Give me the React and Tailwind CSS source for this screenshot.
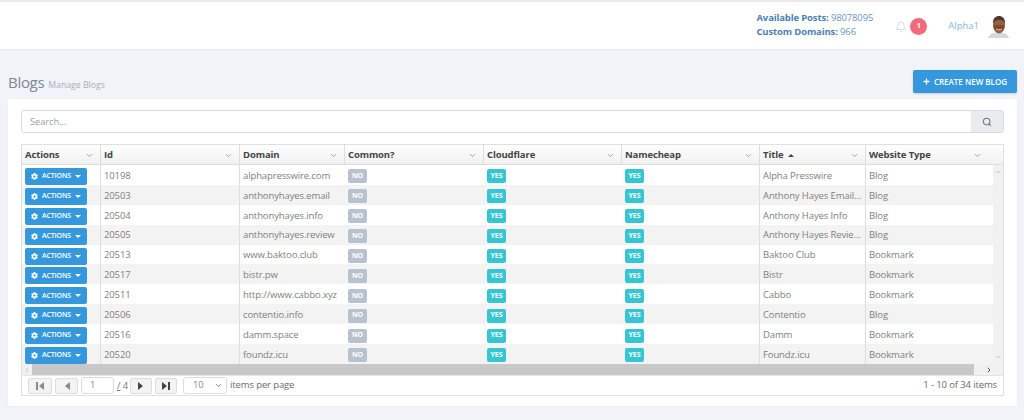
import { Bell, ChevronDown, ChevronLeft, ChevronRight, ChevronUp, Search } from "lucide-react";
import { FaCog, FaPlus } from "react-icons/fa";

const columns = [
  { label: "Actions", width: "w-[78px] pl-[3px] pr-[6px]" },
  { label: "Id", width: "w-[139px] border-l border-[#dddddd] pl-[3px] pr-[6px]" },
  { label: "Domain", width: "w-[105px] border-l border-[#dddddd] pl-[3px] pr-[6px]" },
  { label: "Common?", width: "w-[139px] border-l border-[#dddddd] pl-[3px] pr-[6px]" },
  { label: "Cloudflare", width: "w-[138px] border-l border-[#dddddd] pl-[3px] pr-[6px]" },
  { label: "Namecheap", width: "w-[138px] border-l border-[#dddddd] pl-[3px] pr-[6px]" },
  { label: "Title", width: "w-[106px] border-l border-[#dddddd] pl-[3px] pr-[6px]", sorted: true },
  { label: "Website Type", width: "flex-1 border-l border-[#dddddd] pl-[3px] pr-[21px]" },
];

const rows = [
  ["10198", "alphapresswire.com", "Alpha Presswire", "Blog"],
  ["20503", "anthonyhayes.email", "Anthony Hayes Email...", "Blog"],
  ["20504", "anthonyhayes.info", "Anthony Hayes Info", "Blog"],
  ["20505", "anthonyhayes.review", "Anthony Hayes Revie...", "Blog"],
  ["20513", "www.baktoo.club", "Baktoo Club", "Bookmark"],
  ["20517", "bistr.pw", "Bistr", "Bookmark"],
  ["20511", "http://www.cabbo.xyz", "Cabbo", "Bookmark"],
  ["20506", "contentio.info", "Contentio", "Blog"],
  ["20516", "damm.space", "Damm", "Bookmark"],
  ["20520", "foundz.icu", "Foundz.icu", "Bookmark"],
];

function Avatar() {
  return (
    <svg width="21" height="22" viewBox="0 0 21 22" className="shrink-0">
      <path d="M0 22c1-4 5-5.500 10.500-5.500S20 18 21 22z" fill="#d6d9d9" />
      <ellipse cx="11" cy="9" rx="6" ry="8.500" fill="#98603f" />
      <path d="M5 8c-.5-6 3-8 6-8s6.500 2 6 8c-1-3-2-4-6-4S6 5 5 8z" fill="#4a3a33" />
      <path d="M5.500 10c2-1.500 3.500-1 5.500-1s3.500-.5 5.500 1c0 2-1 3-1.500 4-2 1-6 1-8 0-.5-1-1.500-2-1.500-4z" fill="#7d4a30" />
      <path d="M8 13c2 1.200 4 1.200 6 0" stroke="#e6d6ca" strokeWidth="1" fill="none" />
    </svg>
  );
}

function Badge({ yes }) {
  return (
    <span className={`flex h-[14px] w-[19px] items-center justify-center rounded-[2px] text-[7px] font-bold text-white ${yes ? "bg-[#36c6d3]" : "bg-[#b8c1cf]"}`}>
      {yes ? "YES" : "NO"}
    </span>
  );
}

function ActionsButton() {
  return (
    <button className="flex h-[17px] w-[62px] items-center justify-center gap-[4px] rounded-[2px] bg-[#3598dc] text-[7px] font-semibold text-white">
      <FaCog className="text-[7px]" />
      <span>ACTIONS</span>
      <span className="h-0 w-0 border-x-[3px] border-t-[3px] border-x-transparent border-t-white" />
    </button>
  );
}

function PagerButton({ children, muted, width }) {
  return (
    <button className={`flex h-[16px] items-center justify-center rounded-[2px] border border-[#dddddd] bg-[#f3f3f3] ${width} ${muted ? "text-[#8a8a8a]" : "text-[#444444]"}`}>
      {children}
    </button>
  );
}

function Glyph({ d }) {
  return (
    <svg width="10" height="8" viewBox="0 0 10 8" fill="currentColor">
      <path d={d} />
    </svg>
  );
}

export default function App() {
  return (
    <div className="flex h-[420px] w-[1024px] flex-col overflow-hidden bg-[#f2f3f8] font-['Open_Sans',sans-serif]">
      <header className="flex h-[50px] items-center justify-end border-t-2 border-b border-t-[#e8eaec] border-b-[#e8e9ef] bg-white pr-[15px] pt-[2px]">
        <div className="mb-[4px] mr-[22px] text-[9.5px] leading-[14px] tracking-[-0.14px] text-[#6f93b8]">
          <div><span className="font-bold text-[#4a7fb5]">Available Posts:</span> 98078095</div>
          <div><span className="font-bold text-[#4a7fb5]">Custom Domains:</span> 966</div>
        </div>
        <Bell className="h-[12px] w-[12px] text-[#c5d3e0]" strokeWidth={1.5} />
        <span className="ml-[3px] flex h-[17px] w-[17px] items-center justify-center rounded-full bg-[#f36a7b] text-[7px] font-bold text-white">1</span>
        <span className="ml-[21px] mr-[9px] text-[9.5px] text-[#8db4dc]">Alpha1</span>
        <Avatar />
      </header>

      <div className="flex h-[49px] items-end justify-between pb-[6px] pl-[8px] pr-[7px]">
        <div className="flex items-baseline gap-[4px]">
          <h1 className="text-[15px] leading-[22px] tracking-[-0.3px] text-[#7d8694]">Blogs</h1>
          <span className="text-[8.7px] text-[#a7afbc]">Manage Blogs</span>
        </div>
        <button className="flex h-[23px] w-[104px] items-center justify-end gap-[4px] rounded-[2px] bg-[#3598dc] pr-[10px] text-[8px] font-semibold text-white shadow-[0_1px_2px_rgba(0,0,0,0.15)]">
          <FaPlus className="text-[7px]" />
          CREATE NEW BLOG
        </button>
      </div>

      <main className="ml-[8px] flex h-[307px] w-[1009px] flex-col bg-white px-[13px] pt-[11px] shadow-[0_1px_3px_rgba(0,0,0,0.04)]">
        <div className="flex h-[23px] overflow-hidden rounded-[3px] border border-[#d5dce6]">
          <input placeholder="Search..." className="flex-1 px-[8px] text-[9.2px] text-[#555555] outline-none placeholder:text-[#9aa0a8]" />
          <button className="flex w-[32px] items-center justify-center bg-[#e9ebef] text-[#6d7680]">
            <Search className="h-[10px] w-[10px]" strokeWidth={2.5} />
          </button>
        </div>

        <div className="mt-[11px] flex h-[252px] flex-col border border-[#e0e0e0] text-[9.5px] tracking-[-0.12px]">
          <div className="flex h-[20px] border-b border-[#dddddd] bg-gradient-to-b from-white to-[#f1f1f1]">
            {columns.map((col) => (
              <div key={col.label} className={`flex items-center justify-between pt-[1px] ${col.width}`}>
                <span className="flex items-center gap-[5px] whitespace-nowrap font-bold text-[#444444]">
                  {col.label}
                  {col.sorted && <span className="h-0 w-0 border-x-[3px] border-b-[3px] border-x-transparent border-b-[#444444]" />}
                </span>
                <ChevronDown className="h-[9px] w-[9px] text-[#888888]" />
              </div>
            ))}
          </div>

          <div className="flex min-h-0 flex-1">
            <div className="flex-1">
              {rows.map((row, i) => (
                <div key={row[0]} className={`flex h-[19.9px] items-center text-[#808080] ${i % 2 ? "bg-[#f3f3f3]" : "bg-white"}`}>
                  <div className="flex h-full w-[78px] items-center pl-[3px] pt-[3px]"><ActionsButton /></div>
                  <div className="flex h-full w-[139px] items-center border-l border-[#dddddd] pl-[3px] pt-[2px]">{row[0]}</div>
                  <div className="flex h-full w-[105px] items-center whitespace-nowrap border-l border-[#dddddd] pl-[3px] pt-[2px]">{row[1]}</div>
                  <div className="flex h-full w-[139px] items-center pl-[4px] pt-[3px]"><Badge /></div>
                  <div className="flex h-full w-[138px] items-center pl-[4px] pt-[3px]"><Badge yes /></div>
                  <div className="flex h-full w-[138px] items-center pl-[4px] pt-[3px]"><Badge yes /></div>
                  <div className="flex h-full w-[106px] items-center whitespace-nowrap border-l border-[#dddddd] pl-[3px] pt-[2px]">{row[2]}</div>
                  <div className="flex h-full flex-1 items-center border-l border-[#dddddd] pl-[3px] pt-[2px]">{row[3]}</div>
                </div>
              ))}
            </div>
            <div className="flex w-[10px] flex-col items-center justify-between bg-[#f1f1f1] py-[3px] text-[#b5b5b5]">
              <ChevronUp className="h-[8px] w-[8px]" />
              <ChevronDown className="h-[8px] w-[8px]" />
            </div>
          </div>

          <div className="flex h-[11px] items-center bg-[#f1f1f1]">
            <ChevronLeft className="h-[8px] w-[10px] text-[#b5b5b5]" />
            <div className="h-full w-[942px] bg-[#c8c8c8]" />
            <ChevronRight className="ml-[11px] h-[8px] w-[8px] text-[#505050]" strokeWidth={3} />
          </div>

          <div className="flex h-[20px] items-center justify-between border-t border-[#e5e5e5] pl-[6px] pr-[6px] text-[9.5px] tracking-[-0.12px] text-[#6b6b6b]">
            <div className="flex items-center">
              <PagerButton muted width="w-[24px]"><Glyph d="M1 0h2v8H1zM9 0v8L4 4z" /></PagerButton>
              <span className="ml-[3px]"><PagerButton muted width="w-[23px]"><Glyph d="M8 0v8L3 4z" /></PagerButton></span>
              <span className="ml-[3px] flex h-[17px] w-[33px] items-center rounded-[3px] border border-[#dddddd] pl-[8px] text-[#8a8a8a]">1</span>
              <span className="ml-[3px] w-[12px] translate-y-[1px] whitespace-nowrap text-[#777777]"><span className="underline">/</span> 4</span>
              <span className="ml-[1px]"><PagerButton width="w-[22px]"><Glyph d="M2 0v8l5-4z" /></PagerButton></span>
              <span className="ml-[3px]"><PagerButton width="w-[22px]"><Glyph d="M1 0v8l5-4zM7 0h2v8H7z" /></PagerButton></span>
              <span className="ml-[6px] flex h-[17px] w-[44px] items-center justify-between rounded-[3px] border border-[#dddddd] pl-[9px] pr-[3px] text-[#8a8a8a]">
                10
                <ChevronDown className="h-[9px] w-[9px] text-[#555555]" />
              </span>
              <span className="ml-[3px]">items per page</span>
            </div>
            <span>1 - 10 of 34 items</span>
          </div>
        </div>
      </main>
    </div>
  );
}
